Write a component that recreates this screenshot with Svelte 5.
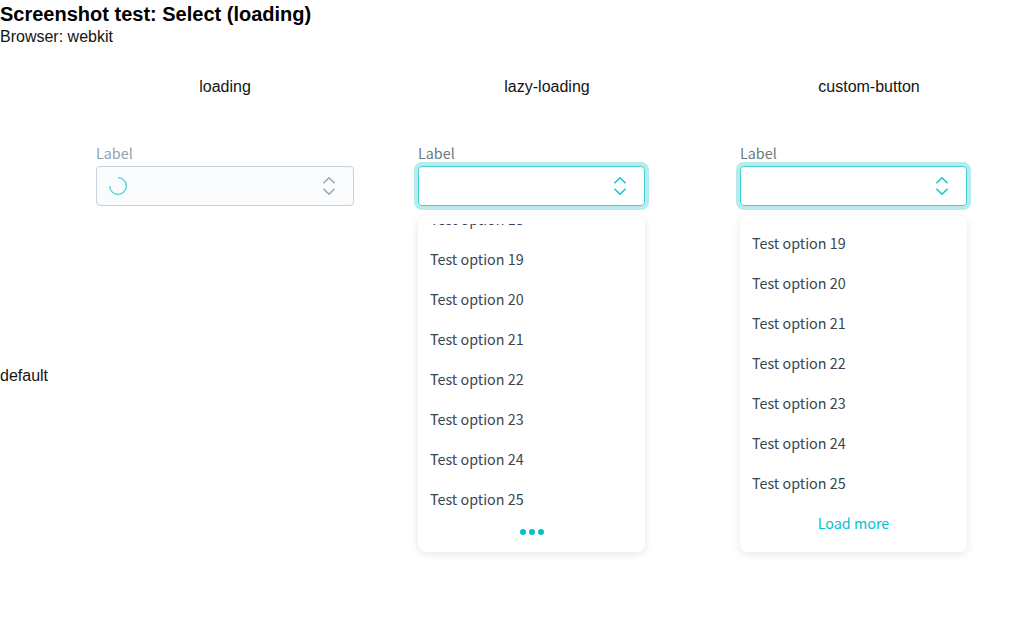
<script>
  const labels = (from) => Array.from({ length: 26 - from }, (_, i) => `Test option ${from + i}`);
  const cells = [
    { name: 'loading', disabled: true },
    { name: 'lazy-loading', options: labels(18) },
    { name: 'custom-button', options: labels(19), button: 'Load more' },
  ];
</script>

<main>
  <h1>Screenshot test: Select (loading)</h1>
  <p class="browser">Browser: webkit</p>
  <div class="grid">
    <span></span>
    {#each cells as cell}
      <div class="heading">{cell.name}</div>
    {/each}
    <div class="row-name">default</div>
    {#each cells as cell}
      <div class="cell" class:disabled={cell.disabled}>
        <div class="label">Label</div>
        <div class="control">
          {#if cell.disabled}
            <svg class="spinner" width="18" height="18" viewBox="0 0 18 18">
              <path d="M9 .6A8.4 8.4 0 1 1 .6 9" />
            </svg>
          {/if}
          <svg class="arrows" width="14" height="20" viewBox="0 0 14 20">
            <path d="M1.4 7.3 7 1.8 12.6 7.3M1.4 12.7 7 18.2 12.6 12.7" />
          </svg>
        </div>
        {#if cell.options}
          <div class="menu">
            <div class="list" class:scrolled={!cell.button}>
              {#each cell.options as option}
                <div class="option">{option}</div>
              {/each}
              {#if cell.button}
                <div class="option more">{cell.button}</div>
              {:else}
                <div class="dots"><i></i><i></i><i></i></div>
              {/if}
            </div>
          </div>
        {/if}
      </div>
    {/each}
  </div>
</main>

<style>
  :global(body) { background: #fff; overflow: hidden; }
  main { font: 16px/18px "Liberation Sans", Arial, sans-serif; color: #000; }
  h1 { margin: 0; padding-top: 3px; font-size: 20px; line-height: 23px; font-weight: 700; }
  .browser { margin: 2px 0 32px; }
  .browser, .heading, .row-name { color: #141414; }
  .grid {
    display: grid;
    grid-template-columns: 32px repeat(3, 258px);
    column-gap: 64px;
  }
  .heading { height: 66px; text-align: center; }
  .row-name { height: 464px; line-height: 464px; white-space: nowrap; }
  .cell { font-family: "Noto Sans CJK SC", "Open Sans", sans-serif; font-size: 14.33px; color: #36474f; }
  .label { height: 22px; line-height: 18px; color: #697882; }
  .control {
    box-sizing: border-box;
    display: flex;
    align-items: center;
    width: 227px;
    height: 40px;
    padding: 0 17px 0 12px;
    border: 1px solid #3cd0d5;
    border-radius: 4px;
    box-shadow: 0 0 0 4px #b8ebec;
  }
  .disabled .label { color: #93a2ac; }
  .disabled .control { width: 258px; border-color: #c5d2dc; background: #fafbfd; box-shadow: none; }
  svg { fill: none; }
  .spinner { stroke: #3cd0d5; stroke-width: 1.2; }
  .arrows { margin-left: auto; stroke: #17c5cc; stroke-width: 1.6; }
  .disabled .arrows { stroke: #9aa6af; }
  .menu {
    box-sizing: border-box;
    width: 227px;
    height: 336px;
    margin-top: 10px;
    padding: 8px 0;
    border-radius: 8px;
    background: #fff;
    box-shadow: 0 2px 8px rgba(0, 0, 0, .1);
  }
  .list { display: flex; flex-direction: column; height: 320px; overflow: hidden; }
  .scrolled { justify-content: flex-end; }
  .option { flex: none; height: 40px; line-height: 38px; padding: 0 12px; }
  .more { text-align: center; color: #00c1ca; }
  .dots { flex: none; display: flex; justify-content: center; align-items: center; gap: 3px; height: 24px; }
  .dots i { width: 6px; height: 6px; border-radius: 50%; background: #00c3cd; }
</style>
